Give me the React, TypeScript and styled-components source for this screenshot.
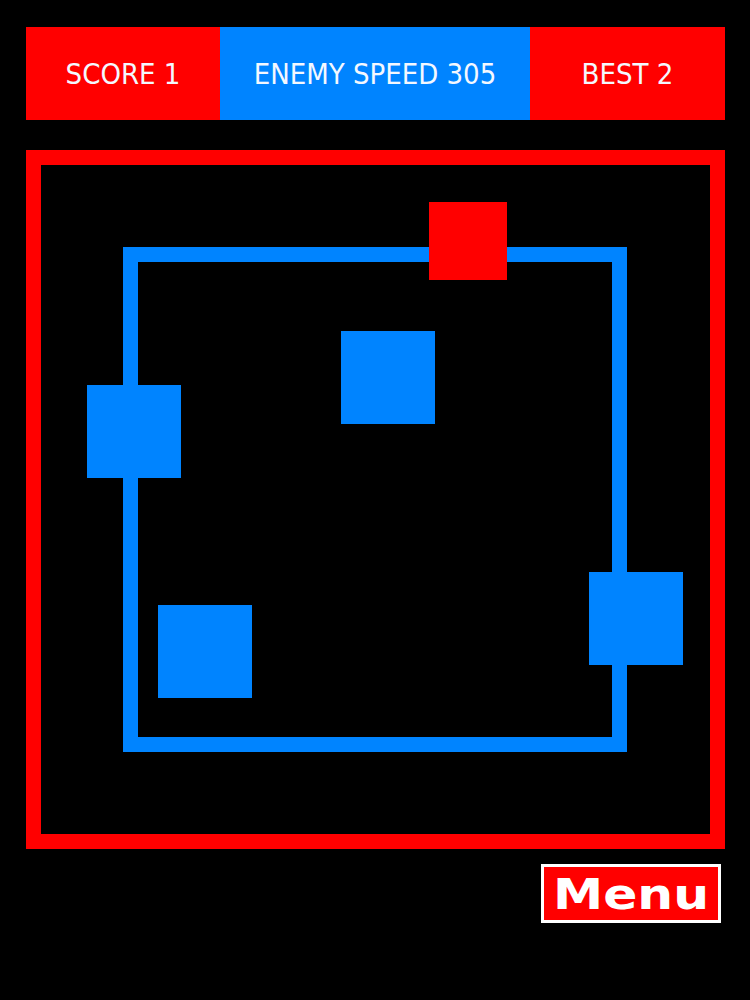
import { createGlobalStyle, styled } from 'styled-components';

const RED = '#ff0000';
const BLUE = '#0084ff';

const GlobalStyle = createGlobalStyle`
  html, body {
    margin: 0;
    padding: 0;
    background: #000;
  }
`;

type Block = { x: number; y: number };

const players: Block[] = [
  { x: 46, y: 220 },
  { x: 300, y: 166 },
  { x: 117, y: 440 },
  { x: 548, y: 407 },
];

const enemy: Block = { x: 388, y: 37 };

const App: React.FC = () => {
  return (
    <Page>
      <GlobalStyle />
      <ScoreBar>
        <Stat $tone="red">SCORE 1</Stat>
        <Stat $tone="blue">ENEMY SPEED 305</Stat>
        <Stat $tone="red">BEST 2</Stat>
      </ScoreBar>

      <Arena>
        <Track />
        {players.map((p, i) => (
          <PlayerBlock key={i} style={{ left: p.x, top: p.y }} />
        ))}
        <EnemyBlock style={{ left: enemy.x, top: enemy.y }} />
      </Arena>

      <Footer>
        <MenuButton>
          <MenuLabel>Menu</MenuLabel>
        </MenuButton>
      </Footer>
    </Page>
  );
};

const Page = styled.main`
  width: 699px;
  padding: 27px 0 0 26px;
  display: flex;
  flex-direction: column;
`;

const ScoreBar = styled.header`
  display: grid;
  grid-template-columns: 194px 310px 195px;
  height: 93px;
`;

const Stat = styled.div<{ $tone: 'red' | 'blue' }>`
  display: flex;
  align-items: center;
  justify-content: center;
  background: ${({ $tone }) => ($tone === 'red' ? RED : BLUE)};
  color: #f4f8ff;
  font-family: 'DejaVu Sans Condensed', 'DejaVu Sans', sans-serif;
  font-size: 29px;
  padding-top: 1px;
`;

const Arena = styled.section`
  position: relative;
  margin-top: 30px;
  width: 699px;
  height: 699px;
  box-sizing: border-box;
  border: 15px solid ${RED};
`;

const Track = styled.div`
  position: absolute;
  left: 82px;
  top: 82px;
  width: 504px;
  height: 505px;
  box-sizing: border-box;
  border: 15px solid ${BLUE};
`;

const PlayerBlock = styled.div`
  position: absolute;
  width: 94px;
  height: 93px;
  background: ${BLUE};
`;

const EnemyBlock = styled.div`
  position: absolute;
  width: 78px;
  height: 78px;
  background: ${RED};
`;

const Footer = styled.footer`
  display: flex;
  justify-content: flex-end;
  padding: 15px 4px 0 0;
`;

const MenuButton = styled.button`
  width: 180px;
  height: 59px;
  box-sizing: border-box;
  border: 3px solid #fff;
  background: ${RED};
  display: flex;
  align-items: center;
  justify-content: center;
  padding: 0;
  cursor: pointer;
`;

const MenuLabel = styled.span`
  display: inline-block;
  color: #fff;
  font-family: 'DejaVu Sans', sans-serif;
  font-weight: bold;
  font-size: 42px;
  line-height: 1;
  transform: scaleX(1.2);
  margin-top: 2px;
`;

export default App;
